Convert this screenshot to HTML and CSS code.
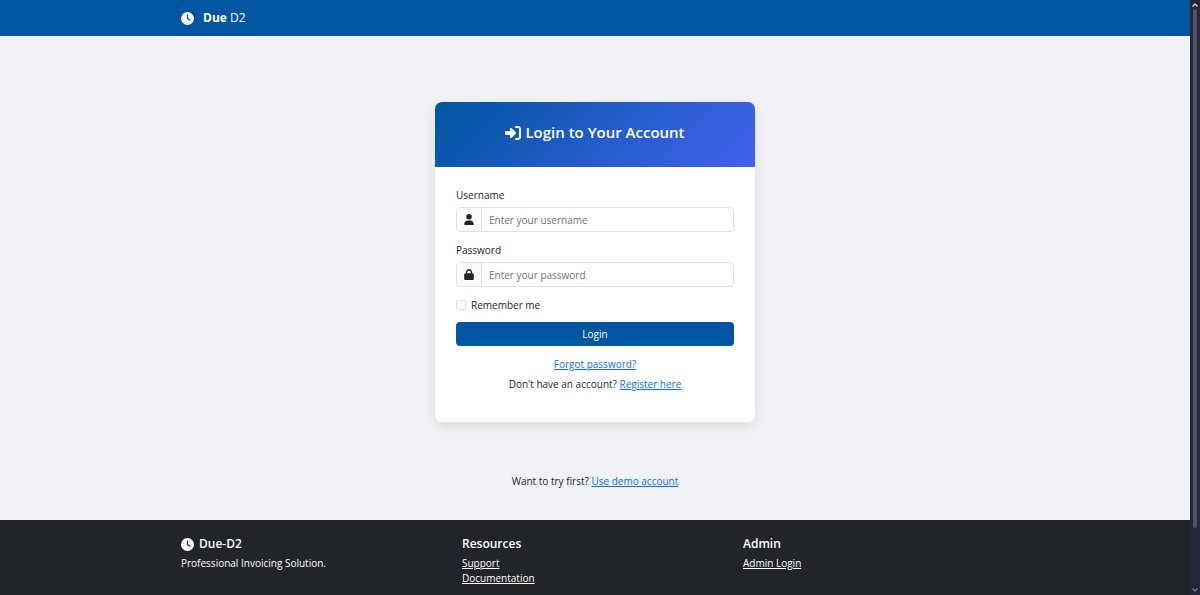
FILE: index.html
```
<!DOCTYPE html>
<html lang="en">
<head>
    <meta charset="UTF-8">
    <meta name="viewport" content="width=device-width, initial-scale=1.0">
    <title>Login - Due D2</title>
    <link rel="stylesheet" href="styles.css">
</head>
<body>
    <div class="page">
        <header class="navbar">
            <div class="container">
                <a class="brand" href="#">
                    <svg class="icon-clock" viewBox="0 0 512 512" aria-hidden="true"><path fill="currentColor" d="M256 0a256 256 0 1 1 0 512A256 256 0 1 1 256 0zM232 120V256c0 8 4 15.500 10.700 20l96 64c11 7.400 25.900 4.400 33.300-6.700s4.400-25.900-6.700-33.300L280 243.200V120c0-13.300-10.700-24-24-24s-24 10.700-24 24z"/></svg>
                    <span><strong>Due</strong> D2</span>
                </a>
            </div>
        </header>

        <main class="main">
            <section class="card">
                <div class="card-header">
                    <h1>
                        <svg class="icon-login" viewBox="0 0 512 512" aria-hidden="true"><path fill="currentColor" d="M352 96l64 0c17.700 0 32 14.300 32 32l0 256c0 17.700-14.300 32-32 32l-64 0c-17.700 0-32 14.300-32 32s14.300 32 32 32l64 0c53 0 96-43 96-96l0-256c0-53-43-96-96-96l-64 0c-17.700 0-32 14.300-32 32s14.300 32 32 32zm-9.400 182.600c12.500-12.500 12.500-32.800 0-45.300l-128-128c-9.200-9.200-22.900-11.900-34.900-6.900s-19.800 16.600-19.800 29.600l0 64L32 192c-17.700 0-32 14.300-32 32l0 64c0 17.700 14.300 32 32 32l128 0 0 64c0 12.900 7.800 24.600 19.800 29.600s25.700 2.200 34.900-6.900l128-128z"/></svg>
                        Login to Your Account
                    </h1>
                </div>
                <div class="card-body">
                    <form id="loginForm">
                        <label for="username">Username</label>
                        <div class="input-group">
                            <span class="input-icon">
                                <svg viewBox="0 0 448 512" aria-hidden="true"><path fill="currentColor" d="M224 256A128 128 0 1 0 224 0a128 128 0 1 0 0 256zm-45.700 48C79.800 304 0 383.800 0 482.300C0 498.700 13.300 512 29.700 512H418.300c16.400 0 29.700-13.300 29.700-29.700C448 383.800 368.200 304 269.700 304H178.300z"/></svg>
                            </span>
                            <input type="text" id="username" placeholder="Enter your username" required>
                        </div>

                        <label for="password">Password</label>
                        <div class="input-group">
                            <span class="input-icon">
                                <svg viewBox="0 0 448 512" aria-hidden="true"><path fill="currentColor" d="M144 144v48H304V144c0-44.200-35.800-80-80-80s-80 35.800-80 80zM80 192V144C80 64.500 144.500 0 224 0s144 64.500 144 144v48h16c35.300 0 64 28.700 64 64V448c0 35.300-28.700 64-64 64H64c-35.300 0-64-28.700-64-64V256c0-35.300 28.700-64 64-64H80z"/></svg>
                            </span>
                            <input type="password" id="password" placeholder="Enter your password" required>
                        </div>

                        <div class="form-check">
                            <input type="checkbox" id="remember">
                            <label for="remember">Remember me</label>
                        </div>

                        <button type="submit">Login</button>
                    </form>
                    <div class="card-links">
                        <p><a href="#">Forgot password?</a></p>
                        <p>Don't have an account? <a href="#">Register here</a></p>
                    </div>
                </div>
            </section>
            <p class="demo">Want to try first? <a href="#">Use demo account</a></p>
        </main>

        <footer class="footer">
            <div class="container footer-columns">
                <div>
                    <h2>
                        <svg class="icon-clock" viewBox="0 0 512 512" aria-hidden="true"><path fill="currentColor" d="M256 0a256 256 0 1 1 0 512A256 256 0 1 1 256 0zM232 120V256c0 8 4 15.500 10.700 20l96 64c11 7.400 25.900 4.400 33.300-6.700s4.400-25.900-6.700-33.300L280 243.200V120c0-13.300-10.700-24-24-24s-24 10.700-24 24z"/></svg>
                        Due-D2
                    </h2>
                    <p>Professional Invoicing Solution.</p>
                </div>
                <div>
                    <h2>Resources</h2>
                    <ul>
                        <li><a href="#">Support</a></li>
                        <li><a href="#">Documentation</a></li>
                    </ul>
                </div>
                <div>
                    <h2>Admin</h2>
                    <ul>
                        <li><a href="#">Admin Login</a></li>
                    </ul>
                </div>
            </div>
        </footer>
    </div>

    <div class="scrollbar" aria-hidden="true">
        <svg viewBox="0 0 8 8"><path d="M1.500 5.500L4 3l2.500 2.500" fill="none" stroke="#c9c9d2" stroke-width="1.500"/></svg>
        <div class="scrollbar-track"><div class="scrollbar-thumb"></div></div>
        <svg viewBox="0 0 8 8"><path d="M1.500 2.500L4 5l2.500-2.500" fill="none" stroke="#77777f" stroke-width="1.500"/></svg>
    </div>
</body>
</html>
```
FILE: styles.css
```
* {
    box-sizing: border-box;
}
body {
    display: flex;
    height: 100vh;
    margin: 0;
    overflow: hidden;
    font-family: "Segoe UI", "Open Sans", "Noto Sans", sans-serif;
    font-size: 10px;
    line-height: 16px;
    color: #212529;
    background-color: #f0f2f5;
}
h1, h2, p, ul {
    margin: 0;
    padding: 0;
}
a {
    color: #0d6efd;
}
.page {
    display: flex;
    flex: 1;
    flex-direction: column;
    min-width: 0;
}
.container {
    width: 100%;
    max-width: 844px;
    margin: 0 auto;
    padding: 0 8px;
}

/* Navbar */
.navbar {
    padding: 8px 0;
    color: white;
    background-color: #0056a0;
}
.brand {
    display: inline-flex;
    align-items: center;
    gap: 9px;
    font-size: 12px;
    line-height: 20px;
    color: white;
    text-decoration: none;
    vertical-align: top;
}
.icon-clock {
    width: 13px;
    height: 13px;
}

/* Login card */
.main {
    flex: 1 0 auto;
    padding: 66px 16px 30px;
}
.card {
    max-width: 320px;
    margin: 0 auto;
    overflow: hidden;
    background-color: white;
    border-radius: 7px;
    box-shadow: 0 4px 12px rgba(0, 0, 0, 0.1);
}
.card-header {
    padding: 20px 20px 24px;
    color: white;
    background: linear-gradient(135deg, #0056a0, #4361ee);
}
.card-header h1 {
    display: flex;
    align-items: center;
    justify-content: center;
    gap: 4px;
    font-size: 15px;
    font-weight: 600;
    line-height: 21px;
}
.icon-login {
    width: 16px;
    height: 16px;
}
.card-body {
    padding: 20px 21px 30px;
}
form > label {
    display: block;
    margin-bottom: 4px;
}
.input-group {
    display: flex;
    height: 25px;
    margin-bottom: 10px;
    border: 1px solid #dee2e6;
    border-radius: 4px;
}
.input-icon {
    display: flex;
    align-items: center;
    justify-content: center;
    width: 25px;
    background-color: #f8f9fa;
    border-right: 1px solid #dee2e6;
    border-radius: 3px 0 0 3px;
}
.input-icon svg {
    width: 10px;
    height: 11px;
}
.input-group input {
    flex: 1;
    min-width: 0;
    padding: 0 7px;
    font: inherit;
    color: #212529;
    background: none;
    border: none;
}
.input-group input::placeholder {
    color: #6c757d;
}
.form-check {
    display: flex;
    align-items: center;
    gap: 5px;
    margin-bottom: 9px;
}
.form-check input {
    width: 10px;
    height: 10px;
    margin: 0;
    appearance: none;
    background-color: white;
    border: 1px solid #dee2e6;
    border-radius: 2px;
}
.form-check input:checked {
    background-color: #0056a0;
}
button {
    display: block;
    width: 100%;
    height: 24px;
    padding: 0;
    font: inherit;
    color: white;
    background-color: #0056a0;
    border: none;
    border-radius: 4px;
    cursor: pointer;
}
button:hover {
    background-color: #004580;
}
.card-links {
    display: grid;
    gap: 4px;
    margin-top: 10px;
    text-align: center;
}
.demo {
    margin-top: 51px;
    text-align: center;
}

/* Footer */
.footer {
    padding: 16px 0 9px;
    line-height: 15px;
    color: white;
    background-color: #212529;
}
.footer-columns {
    display: grid;
    grid-template-columns: repeat(3, 1fr);
    gap: 15px;
}
.footer h2 {
    display: flex;
    align-items: center;
    gap: 5px;
    margin-bottom: 4px;
    font-size: 12px;
    font-weight: 600;
    line-height: 16px;
}
.footer ul {
    list-style: none;
}
.footer a {
    color: white;
}

/* Scrollbar */
.scrollbar {
    display: flex;
    flex-direction: column;
    align-items: center;
    width: 10px;
    padding: 1px 0;
    background-color: #252737;
}
.scrollbar svg {
    width: 8px;
    height: 8px;
}
.scrollbar-track {
    flex: 1;
    width: 4px;
}
.scrollbar-thumb {
    height: 90%;
    background-color: #50506a;
    border-radius: 2px;
}
```
